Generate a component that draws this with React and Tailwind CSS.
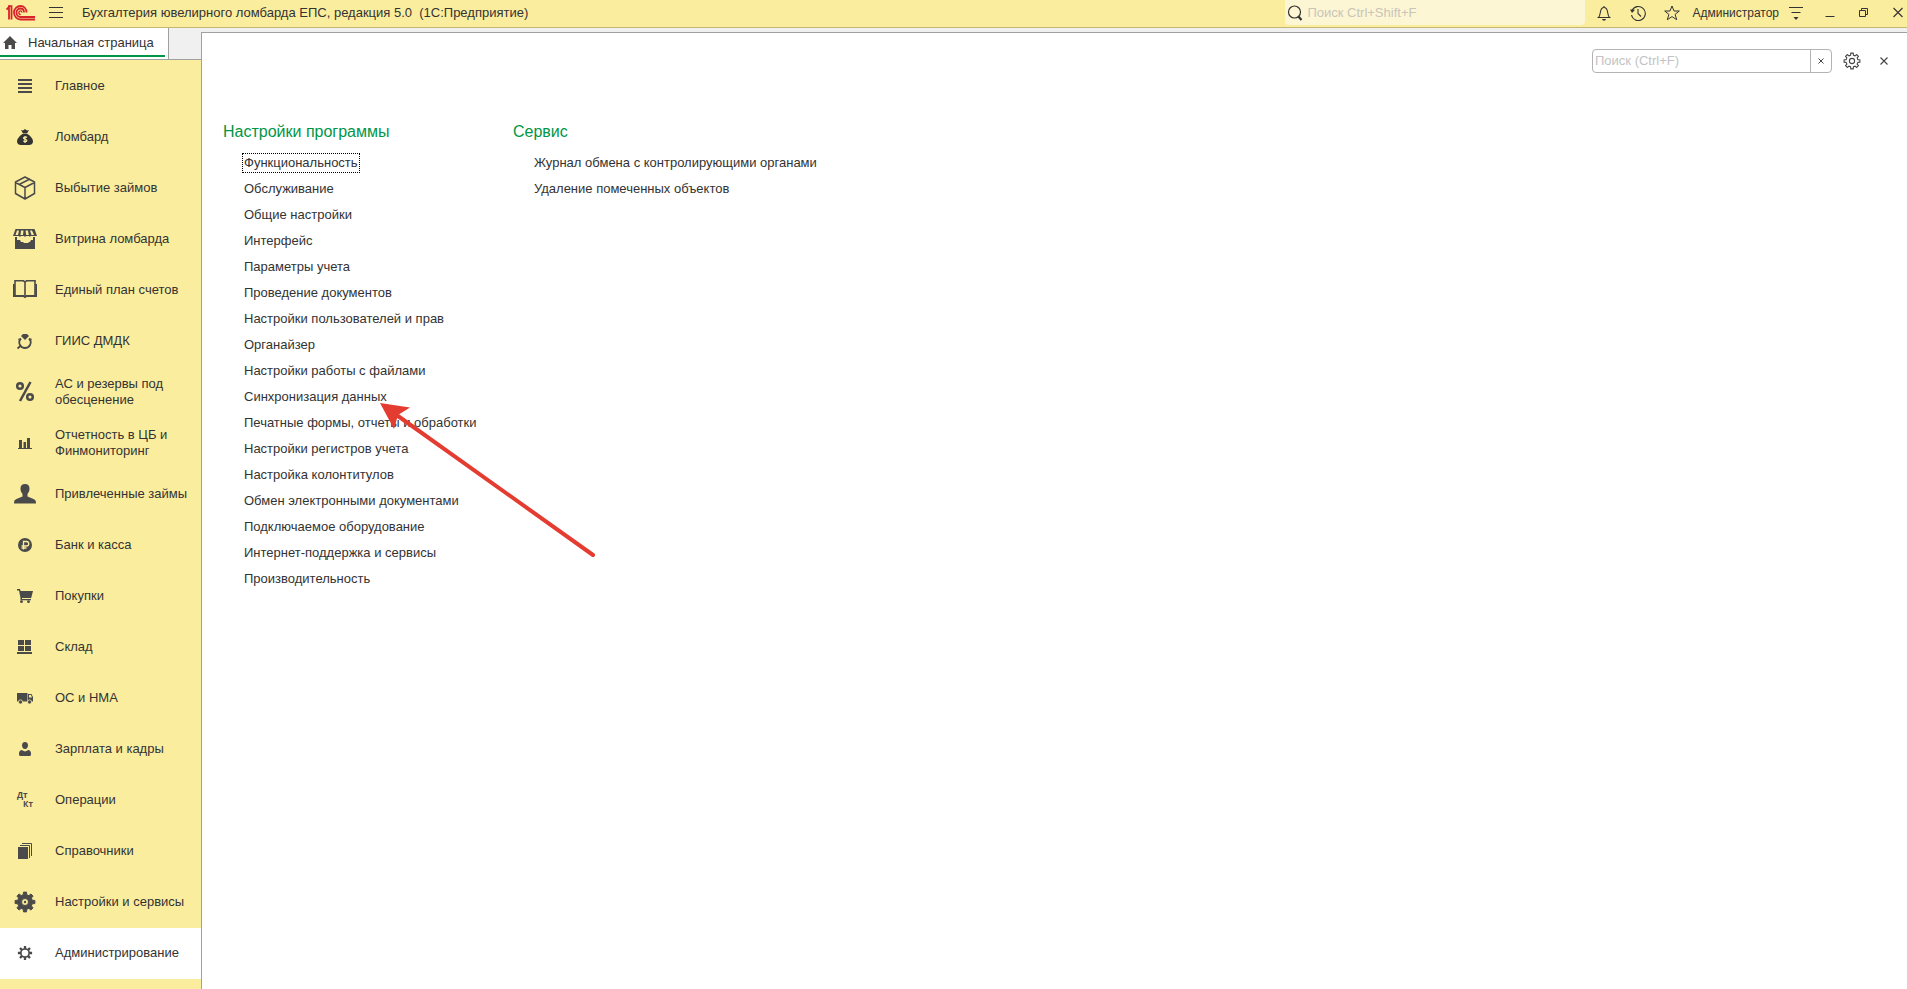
import React from "react";

const SvgIcon = ({ children, size = 24 }) => (
  <svg width={size} height={size} viewBox={`0 0 ${size} ${size}`} fill="none" aria-hidden="true" className="shrink-0">
    {children}
  </svg>
);

// Builds a toothed wheel outline around a centre point
const gearPath = (c, outer, inner, teeth) => {
  const step = (Math.PI * 2) / teeth;
  const points = [];
  for (let i = 0; i < teeth; i++) {
    const a = i * step - Math.PI / 2;
    [[-0.3, inner], [-0.2, outer], [0.2, outer], [0.3, inner]].forEach(([k, r]) => {
      points.push(`${(c + Math.cos(a + k * step) * r).toFixed(2)} ${(c + Math.sin(a + k * step) * r).toFixed(2)}`);
    });
  }
  return `M${points.join("L")}Z`;
};

const INK = "#4a4a4a";

const icons = {
  main: <path fill={INK} d="M5 5h14v2H5zM5 9h14v2H5zM5 13h14v2H5zM5 17h14v2H5z" />,
  bag: (
    <>
      <path fill="#333" d="M8 5l2 .5L12 4l2 1.500L16 5l-2 3.500h-4zM9.500 9h5c3 2 5.500 4.500 5.500 7.500 0 2.500-2 3.500-4 3.500H8c-2 0-4-1-4-3.500C4 13.500 6.500 11 9.500 9z" />
      <path stroke="#fbed9e" strokeWidth="1.200" d="M14 12.500c-.8-.8-3.500-.8-3.500.6 0 1.500 3.400.8 3.400 2.300 0 1.500-2.800 1.400-3.700.5M12 11v7" />
    </>
  ),
  box: (
    <g stroke={INK} strokeWidth="1.500" strokeLinejoin="round">
      <path d="M12 1l9.500 5v11.500L12 23l-9.500-5.500V6zM2.500 6.500L12 11.500l9.500-5M12 11.500V23" />
      <path d="M7 9V8l10-5" />
    </g>
  ),
  shop: (
    <>
      <path fill={INK} d="M2.500 2h19L24 9h-6.500L17 10l-1-1h-3l-1 1-1-1H8l-1 1-1-1H0z" />
      <path fill="#fbed9e" d="M4 3.500h2L5 8H2.500zM8 3.500h2.500L10 8H7.500zM12.500 3.500H15l.8 4.500h-2.600zM17 3.500h2L21 8h-2.500z" />
      <path fill={INK} d="M2 10h2v3h3l1 2h2l1 1h4l1-1h1l1-2h2v-3h2v12H2z" />
    </>
  ),
  book: (
    <>
      <path stroke={INK} strokeWidth="1.600" d="M2 17V2.800h8.500L12 4l1.500-1.200H22V17M12 4v14" />
      <path stroke={INK} strokeWidth="1.800" d="M.9 6v12h9.600l1.500 1.200 1.500-1.200h9.600V6" />
    </>
  ),
  giis: (
    <>
      <path stroke={INK} strokeWidth="1.800" d="M8 9.500a5.500 5.500 0 0 0-1 6.500c1 2 3 3 5 3s4-1 5-3a5.500 5.500 0 0 0-1-6.500M8 16.500l-3.500 3" />
      <path stroke={INK} strokeWidth="1.500" d="M5.500 10l2 1M18.500 10l-2 1" />
      <path fill={INK} d="M10 5h4l2 2-4 4-4-4z" />
    </>
  ),
  percent: (
    <g stroke={INK} strokeWidth="2.500">
      <circle cx="7" cy="6" r="2.800" />
      <circle cx="17" cy="17" r="2.800" />
      <path d="M17.500 2L7 21" />
    </g>
  ),
  bars: <path fill={INK} d="M6 9h3v8h1.500v-6H13v6h1V7h3v10h2v1H5v-1h1z" />,
  person: (
    <path fill={INK} d="M12 2c3 0 4.500 1.500 4.500 4.500 0 2.500-.8 4-2 5.500v2.500l6 2.500c2 .8 2.500 2 2.500 4.500H1c0-2.500.5-3.700 2.500-4.500l6-2.500V12c-1.200-1.500-2-3-2-5.500C7.500 3.500 9 2 12 2z" />
  ),
  ruble: (
    <>
      <circle cx="12" cy="12" r="7" fill={INK} />
      <path stroke="#fbed9e" strokeWidth="1.300" d="M10.500 16.500v-8h3a2.200 2.200 0 0 1 0 4.500H8.500M8.500 15h5" />
    </>
  ),
  cart: (
    <>
      <path fill={INK} d="M4 5h3l.6 2H20l-1.800 7H9v1h9v1.200H7.500V14L6 6.500H4z" />
      <circle cx="8.500" cy="17.700" r="1.400" fill={INK} />
      <circle cx="15.500" cy="17.700" r="1.400" fill={INK} />
    </>
  ),
  stock: <path fill={INK} d="M5 5h6v5H5zM12 5h6v5h-6zM5 11h6v5H5zM12 11h6v5h-6zM4 17h15v2H4z" />,
  truck: (
    <>
      <path fill={INK} d="M4 7h10.500v8.500H4zM15 8h3.500L20 11v4.500h-5z" />
      <path fill="#fbed9e" d="M16 9h2l1 2.500h-3z" />
      <circle cx="7.500" cy="16" r="2.100" fill={INK} stroke="#fbed9e" strokeWidth=".8" />
      <circle cx="16.500" cy="16" r="2.100" fill={INK} stroke="#fbed9e" strokeWidth=".8" />
    </>
  ),
  worker: (
    <path fill={INK} d="M12 5c2 0 3 1.300 3 3.200 0 1.800-.8 3.800-3 3.800s-3-2-3-3.800C9 6.300 10 5 12 5zM8.500 13l3.500 1.500 3.500-1.500c2 .5 2.500 2 2.500 4 0 1.500-.5 2-1.500 2h-9C6.500 19 6 18.500 6 17c0-2 .5-3.500 2.500-4z" />
  ),
  debit: (
    <g fill={INK} fontFamily="Open Sans, sans-serif" fontWeight="700" fontSize="8">
      <text x="4" y="10">Дт</text>
      <text x="10" y="19">Кт</text>
    </g>
  ),
  refs: (
    <>
      <path fill={INK} d="M5 8h10v12H5z" />
      <path stroke={INK} d="M7 6.500h9.500V19M9 4.500h9.500V17" />
    </>
  ),
  gear: (
    <>
      <path fill={INK} fillRule="evenodd" strokeLinejoin="round" stroke={INK} d={`${gearPath(12, 10, 7.5, 8)}M12 8.500a3.500 3.500 0 1 0 0 7 3.500 3.500 0 1 0 0-7z`} />
      <circle cx="12" cy="12" r="1.200" fill={INK} />
    </>
  ),
  gearSmall: (
    <path fill={INK} fillRule="evenodd" d={`${gearPath(12, 7.2, 5, 8)}M12 8.700a3.300 3.300 0 1 0 0 6.600 3.300 3.300 0 1 0 0-6.600z`} />
  ),
};

const sections = [
  { icon: "main", title: "Главное" },
  { icon: "bag", title: "Ломбард" },
  { icon: "box", title: "Выбытие займов" },
  { icon: "shop", title: "Витрина ломбарда" },
  { icon: "book", title: "Единый план счетов" },
  { icon: "giis", title: "ГИИС ДМДК" },
  { icon: "percent", title: "АС и резервы под обесценение" },
  { icon: "bars", title: "Отчетность в ЦБ и Финмониторинг" },
  { icon: "person", title: "Привлеченные займы" },
  { icon: "ruble", title: "Банк и касса" },
  { icon: "cart", title: "Покупки" },
  { icon: "stock", title: "Склад" },
  { icon: "truck", title: "ОС и НМА" },
  { icon: "worker", title: "Зарплата и кадры" },
  { icon: "debit", title: "Операции" },
  { icon: "refs", title: "Справочники" },
  { icon: "gear", title: "Настройки и сервисы" },
  { icon: "gearSmall", title: "Администрирование", active: true },
];

const settingsLinks = [
  "Функциональность",
  "Обслуживание",
  "Общие настройки",
  "Интерфейс",
  "Параметры учета",
  "Проведение документов",
  "Настройки пользователей и прав",
  "Органайзер",
  "Настройки работы с файлами",
  "Синхронизация данных",
  "Печатные формы, отчеты и обработки",
  "Настройки регистров учета",
  "Настройка колонтитулов",
  "Обмен электронными документами",
  "Подключаемое оборудование",
  "Интернет-поддержка и сервисы",
  "Производительность",
];

const serviceLinks = ["Журнал обмена с контролирующими органами", "Удаление помеченных объектов"];

const Logo = () => (
  <svg width="29" height="16" viewBox="0 0 29 16" fill="none" stroke="#d8232a" strokeWidth="1.800" role="img" aria-label="1С">
    <path d="M.5 4.500L3 2v12.500M2 1.200h3.500v13.300" />
    <path d="M20.500 7.500c0-4-2.500-6.500-6-6.500S8 4 8 7.500s2.800 7 6.500 7H29" />
    <path d="M18 7.500c0-2.500-1.300-4-3.500-4s-4 1.700-4 4 1.500 4.500 4 4.500H29" />
    <path strokeWidth="1.300" d="M15.800 7.500c0-1-.5-1.600-1.400-1.600-.9 0-1.600.7-1.600 1.600 0 1.200.7 2 1.900 2" />
  </svg>
);

const IconButton = ({ label, className, children }) => (
  <button type="button" aria-label={label} className={`flex shrink-0 items-center justify-center ${className}`}>
    {children}
  </button>
);

const TopBar = () => (
  <header className="flex h-7 items-center border-b border-[#c4b870] bg-[#fbed9e] pb-0.5 pl-1.5 pr-px">
    <Logo />
    <IconButton label="Меню" className="ml-[13px] h-4 w-4">
      <SvgIcon size={16}>
        <path stroke="#333" d="M1 2.500h14M1 7.500h14M1 12.500h14" />
      </SvgIcon>
    </IconButton>
    <h1 className="ml-[18px] whitespace-pre">Бухгалтерия ювелирного ломбарда ЕПС, редакция 5.0  (1С:Предприятие)</h1>

    <label className="ml-auto flex h-[25px] w-[300px] items-center gap-1 self-start rounded-b bg-[#fdf6d4] pl-0.5">
      <SvgIcon size={16}>
        <circle cx="7.500" cy="7" r="6" stroke="#333" strokeWidth="1.200" />
        <path stroke="#333" strokeWidth="2.200" d="M11.500 11.500l3 3.500" />
      </SvgIcon>
      <input
        type="text"
        aria-label="Глобальный поиск"
        placeholder="Поиск Ctrl+Shift+F"
        className="min-w-0 flex-1 bg-transparent outline-none placeholder:text-[#c8c5ba]"
      />
    </label>

    <IconButton label="Уведомления" className="ml-[11px] h-4 w-4">
      <SvgIcon size={16}>
        <path stroke="#333" strokeWidth="1.100" d="M8 1v1.500M1.500 12.500h13M2.500 12.500C4 11 4 9 4.500 6.500 5 4 6 2.500 8 2.500s3 1.500 3.500 4c.5 2.500.5 4.500 2 6" />
        <path fill="#333" d="M6 14h4c-.3 1-1 1.700-2 1.700S6.300 15 6 14z" />
      </SvgIcon>
    </IconButton>
    <IconButton label="История" className="ml-[18px] h-4 w-4">
      <SvgIcon size={16}>
        <path stroke="#333" strokeWidth="1.100" d="M2 5.500A7 7 0 1 1 1.500 10M8 4v4.500l3 3" />
        <path fill="#333" d="M0 4.500l5 .3L2 8z" />
      </SvgIcon>
    </IconButton>
    <IconButton label="Избранное" className="ml-[18px] h-4 w-4">
      <SvgIcon size={16}>
        <path stroke="#333" d="M8 1l2 5h5.300l-4.200 3.400 1.600 5.300L8 11.600l-4.700 3.100 1.600-5.300L.7 6H6z" />
      </SvgIcon>
    </IconButton>
    <button type="button" className="ml-3 text-xs">Администратор</button>
    <IconButton label="Сервис и настройки" className="ml-[9px] h-4 w-4">
      <SvgIcon size={16}>
        <path stroke="#333" strokeWidth="1.200" d="M1 2.500h14M3.500 7.500h9" />
        <path fill="#333" d="M5.500 12h5L8 15z" />
      </SvgIcon>
    </IconButton>
    <IconButton label="Свернуть" className="ml-[18px] h-4 w-4">
      <SvgIcon size={16}>
        <path stroke="#333" d="M3.500 11.500h9" />
      </SvgIcon>
    </IconButton>
    <IconButton label="Восстановить" className="ml-[18px] h-4 w-4">
      <SvgIcon size={16}>
        <path stroke="#333" d="M3.500 5.500h6v6h-6zM5.500 5.500v-2h6v6h-2" />
      </SvgIcon>
    </IconButton>
    <IconButton label="Закрыть" className="ml-[18px] h-4 w-4">
      <SvgIcon size={16}>
        <path stroke="#333" strokeWidth="1.100" d="M3.500 3l9 9M12.500 3l-9 9" />
      </SvgIcon>
    </IconButton>
  </header>
);

const Sidebar = () => (
  <nav aria-label="Разделы" className="flex-1 bg-[#fbed9e] pt-px">
    {sections.map((section) => (
      <button
        key={section.title}
        type="button"
        aria-current={section.active ? "page" : undefined}
        className={`flex h-[51px] w-full items-center gap-[18px] pb-px pl-[13px] pr-2 text-left leading-4 ${section.active ? "bg-white" : ""}`}
      >
        <SvgIcon>{icons[section.icon]}</SvgIcon>
        <span>{section.title}</span>
      </button>
    ))}
  </nav>
);

const LinkGroup = ({ title, links, focused }) => (
  <section>
    <h2 className="text-base leading-5 text-[#009646]">{title}</h2>
    <ul className="mt-2 pl-[19px]">
      {links.map((link) => (
        <li key={link} className="flex h-[26px] items-center">
          <a
            href="#"
            className={`whitespace-nowrap border border-dotted px-px leading-[18px] ${link === focused ? "border-black" : "border-transparent"}`}
          >
            {link}
          </a>
        </li>
      ))}
    </ul>
  </section>
);

const Arrow = () => (
  <svg
    width="220"
    height="160"
    viewBox="0 0 220 160"
    aria-hidden="true"
    className="pointer-events-none absolute left-[176px] top-[368px]"
  >
    <path stroke="#e43c30" strokeWidth="4" strokeLinecap="round" d="M20 15L215 154" />
    <path fill="#e43c30" d="M2 2l30 4.500L20 14l-4 14z" />
  </svg>
);

const App = () => {
  return (
    <div className="flex min-h-screen flex-col bg-[#f0f0f0] font-['Liberation_Sans',Arial,sans-serif] text-[13px] text-[#333]">
      <TopBar />

      <div className="flex flex-1">
        <div className="flex w-[201px] shrink-0 flex-col">
          <div className="flex h-8 border-b border-[#a0a0a0]">
            <button type="button" className="flex w-[169px] flex-col border-r border-[#a0a0a0] bg-white">
              <span className="flex h-[27px] w-full items-center gap-2.5 pl-0.5 pt-0.5">
                <SvgIcon size={16}>
                  <path fill={INK} d="M8 1l7 7h-2v6H9.500v-4h-3v4H3V8H1z" />
                </SvgIcon>
                Начальная страница
              </span>
              <span className="h-0.5 w-[165px] bg-[#009646]" />
            </button>
          </div>
          <Sidebar />
        </div>

        <div className="flex min-w-0 flex-1 flex-col pt-1">
          <main className="relative flex-1 border-l border-t border-[#a0a0a0] bg-white">
            <div className="flex items-center justify-end pr-[15px] pt-4">
              <div className="flex h-6 w-60 rounded-sm border border-[#b3b3b3]">
                <input
                  type="text"
                  aria-label="Поиск"
                  placeholder="Поиск (Ctrl+F)"
                  className="min-w-0 flex-1 px-0.5 outline-none placeholder:text-[#c3c3c3]"
                />
                <IconButton label="Очистить" className="w-[21px] border-l border-[#b3b3b3]">
                  <SvgIcon size={8}>
                    <path stroke="#444" d="M1.500 1.500l5 5M6.500 1.500l-5 5" />
                  </SvgIcon>
                </IconButton>
              </div>
              <IconButton label="Настройки" className="ml-[11px] h-[18px] w-[18px]">
                <SvgIcon size={18}>
                  <path stroke="#444" strokeWidth="1.100" strokeLinejoin="round" d={gearPath(9, 8, 6, 8)} />
                  <circle cx="9" cy="9" r="2.600" stroke="#444" strokeWidth="1.100" />
                </SvgIcon>
              </IconButton>
              <IconButton label="Закрыть раздел" className="ml-[15px] h-4 w-4">
                <SvgIcon size={16}>
                  <path stroke="#444" strokeWidth="1.100" d="M4.500 4.500l7 7M11.500 4.500l-7 7" />
                </SvgIcon>
              </IconButton>
            </div>

            <div className="mt-[49px] grid grid-cols-[290px_1fr] pl-[21px]">
              <LinkGroup title="Настройки программы" links={settingsLinks} focused="Функциональность" />
              <LinkGroup title="Сервис" links={serviceLinks} />
            </div>

            <Arrow />
          </main>
        </div>
      </div>
    </div>
  );
};

export default App;
